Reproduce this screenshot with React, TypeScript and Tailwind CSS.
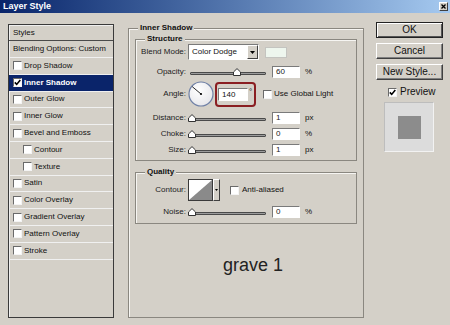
import React from 'react';

type Item = { name: string; indent?: boolean; checked?: boolean; selected?: boolean };

const items: Item[] = [
  { name: 'Drop Shadow' },
  { name: 'Inner Shadow', checked: true, selected: true },
  { name: 'Outer Glow' },
  { name: 'Inner Glow' },
  { name: 'Bevel and Emboss' },
  { name: 'Contour', indent: true },
  { name: 'Texture', indent: true },
  { name: 'Satin' },
  { name: 'Color Overlay' },
  { name: 'Gradient Overlay' },
  { name: 'Pattern Overlay' },
  { name: 'Stroke' },
];

const Check = ({ checked = false }: { checked?: boolean }) => (
  <span className="flex h-[9px] w-[9px] shrink-0 items-center justify-center border border-b-[#f4f4f4] border-l-[#6a6a6a] border-r-[#f4f4f4] border-t-[#6a6a6a] bg-white">
    {checked && (
      <svg width="7" height="7" viewBox="0 0 7 7">
        <path d="M0.8 3.4 L2.7 5.4 L6.3 1" fill="none" stroke="#000" strokeWidth="1.6" />
      </svg>
    )}
  </span>
);

const Slider = ({ pos }: { pos: number }) => (
  <div className="relative h-[10px] w-[78px] shrink-0">
    <div className="absolute left-[2px] right-0 top-[5px] h-[3px] rounded-[1px] border border-[#4a4a4a] bg-[#9c9c9c]" />
    <svg className="absolute top-[1px]" style={{ left: pos }} width="8" height="8" viewBox="0 0 8 8">
      <path d="M0.5 7.5 V4 L4 0.6 L7.5 4 V7.5 Z" fill="#fff" stroke="#333" />
    </svg>
  </div>
);

const Field = ({ value }: { value: string }) => (
  <div className="ml-[6px] h-[12px] w-[28px] shrink-0 border border-b-white border-l-[#7a7a7a] border-r-white border-t-[#7a7a7a] bg-white pl-[3px] text-[8px] leading-[10px] text-[#222]">
    {value}
  </div>
);

const Row = ({ label, children, className = '' }: { label: string; children: React.ReactNode; className?: string }) => (
  <div className={`flex items-center ${className}`}>
    <span className="w-[52px] shrink-0 pr-[2px] text-right text-[8px] leading-none text-[#222]">{label}</span>
    {children}
  </div>
);

const Button = ({ label, primary = false }: { label: string; primary?: boolean }) => (
  <div
    className={`flex h-[16px] w-[67px] items-center justify-center bg-[#d4d0c8] text-[10px] leading-none text-[#111] ${
      primary
        ? 'border border-[#222] shadow-[inset_1px_1px_0_#fff,inset_-1px_-1px_0_#555]'
        : 'border border-b-[#404040] border-l-white border-r-[#404040] border-t-white shadow-[inset_-1px_-1px_0_#808080]'
    }`}
  >
    {label}
  </div>
);

export default function App() {
  return (
    <div className="flex h-[325px] w-[450px] flex-col overflow-hidden bg-[#d4d0c8] font-['Liberation_Sans',Arial,sans-serif] text-[#111]">
      {/* title bar */}
      <div className="flex h-[13px] shrink-0 items-center justify-between bg-gradient-to-r from-[#0a246a] to-[#a6caf0] pl-[3px] pr-[2px]">
        <span className="text-[9px] font-bold leading-none text-white">Layer Style</span>
        <span className="flex h-[9px] w-[9px] items-center justify-center border border-b-[#404040] border-l-white border-r-[#404040] border-t-white bg-[#d4d0c8]">
          <svg width="5" height="5" viewBox="0 0 5 5">
            <path d="M0.5 0.5 L4.5 4.5 M4.5 0.5 L0.5 4.5" stroke="#000" strokeWidth="1.3" />
          </svg>
        </span>
      </div>

      <div className="flex pl-[8px] pt-[10px]">
        {/* styles list */}
        <div className="mt-[1px] flex h-[294px] w-[106px] shrink-0 flex-col border border-[#3a3a3a] shadow-[inset_1px_1px_0_#efefef]">
          <div className="flex h-[16px] items-center border-b border-[#4a4a4a] pl-[4px] text-[8px] leading-none">Styles</div>
          <div className="flex h-[17px] items-center border-b border-[#f0f0f0] pl-[4px] text-[8px] leading-none">
            Blending Options: Custom
          </div>
          {items.map((it) => (
            <div
              key={it.name}
              className={`flex h-[16.8px] items-center gap-[2px] border-b border-[#f0f0f0] text-[8px] leading-none ${
                it.indent ? 'pl-[14px]' : 'pl-[4px]'
              } ${it.selected ? 'bg-[#0a246a] font-bold text-white' : ''}`}
            >
              <Check checked={it.checked} />
              <span>{it.name}</span>
            </div>
          ))}
        </div>

        {/* main group */}
        <fieldset className="ml-[14px] h-[295px] w-[236px] shrink-0 border border-[#8a8780] shadow-[inset_1px_1px_0_#f6f5f2]">
          <legend className="ml-[9px] bg-[#d4d0c8] px-[2px] text-[8px] font-bold leading-[10px]">Inner Shadow</legend>
          <div className="flex flex-col px-[6px]">
            <fieldset className="mt-[1px] h-[127px] border border-[#8a8780] shadow-[inset_1px_1px_0_#f6f5f2]">
              <legend className="ml-[9px] bg-[#d4d0c8] px-[2px] text-[8px] font-bold leading-[10px]">Structure</legend>
              <div className="flex flex-col">
                <Row label="Blend Mode:">
                  <div className="flex h-[16px] w-[71px] shrink-0 border border-b-white border-l-[#7a7a7a] border-r-white border-t-[#7a7a7a] bg-white">
                    <span className="flex flex-1 items-center pl-[3px] text-[8px] leading-none">Color Dodge</span>
                    <span className="flex w-[11px] items-center justify-center border border-b-[#404040] border-l-white border-r-[#404040] border-t-white bg-[#d4d0c8]">
                      <svg width="5" height="3" viewBox="0 0 5 3">
                        <path d="M0 0 H5 L2.5 3 Z" fill="#000" />
                      </svg>
                    </span>
                  </div>
                  <span className="ml-[6px] h-[11px] w-[22px] border border-[#c4c4c0] bg-[#eef6ee]" />
                </Row>
                <Row label="Opacity:" className="mt-[6px] h-[12px]">
                  <Slider pos={45} />
                  <Field value="60" />
                  <span className="ml-[5px] text-[8px] leading-none">%</span>
                </Row>
                <Row label="Angle:" className="mt-[3px] h-[26px]">
                  <svg width="26" height="26" viewBox="0 0 26 26" className="shrink-0">
                    <defs>
                      <radialGradient id="dial" cx="0.4" cy="0.35" r="0.7">
                        <stop offset="0" stopColor="#ffffff" />
                        <stop offset="1" stopColor="#e6e6ea" />
                      </radialGradient>
                    </defs>
                    <circle cx="13" cy="13" r="12" fill="url(#dial)" stroke="#6f80a6" strokeWidth="1.2" />
                    <path d="M13 13 L4.2 5.6" stroke="#111" strokeWidth="0.9" />
                    <circle cx="13" cy="13" r="1.1" fill="#000" />
                  </svg>
                  <div className="ml-[1px] flex h-[25px] w-[41px] shrink-0 items-start rounded-[4px] border-2 border-[#8a1e22] pl-[1px] pt-[4px]">
                    <div className="h-[13px] w-[30px] border border-b-white border-l-[#7a7a7a] border-r-white border-t-[#7a7a7a] bg-white pl-[3px] text-[8px] leading-[11px]">
                      140
                    </div>
                    <span className="ml-[1px] text-[8px] leading-none">°</span>
                  </div>
                  <span className="ml-[7px] flex items-center gap-[2px]">
                    <Check />
                    <span className="text-[8px] leading-none">Use Global Light</span>
                  </span>
                </Row>
                <Row label="Distance:" className="mt-[5px] h-[12px]">
                  <Slider pos={0} />
                  <Field value="1" />
                  <span className="ml-[5px] text-[8px] leading-none">px</span>
                </Row>
                <Row label="Choke:" className="mt-[4px] h-[12px]">
                  <Slider pos={0} />
                  <Field value="0" />
                  <span className="ml-[5px] text-[8px] leading-none">%</span>
                </Row>
                <Row label="Size:" className="mt-[4px] h-[12px]">
                  <Slider pos={0} />
                  <Field value="1" />
                  <span className="ml-[5px] text-[8px] leading-none">px</span>
                </Row>
              </div>
            </fieldset>

            <fieldset className="mt-[6px] border border-[#8a8780] pb-[5px] shadow-[inset_1px_1px_0_#f6f5f2]">
              <legend className="ml-[9px] bg-[#d4d0c8] px-[2px] text-[8px] font-bold leading-[10px]">Quality</legend>
              <Row label="Contour:" className="mt-[2px] h-[22px]">
                <div className="flex h-[22px] shrink-0">
                  <svg width="25" height="22" viewBox="0 0 25 22">
                    <rect x="0.5" y="0.5" width="24" height="21" fill="#fff" stroke="#3a3a3a" />
                    <path d="M1 21 L24 1 V21 Z" fill="#8a8a8a" />
                  </svg>
                  <span className="flex w-[7px] items-center justify-center border border-b-[#404040] border-l-white border-r-[#404040] border-t-white bg-[#d4d0c8]">
                    <svg width="3" height="2" viewBox="0 0 3 2">
                      <path d="M0 0 H3 L1.5 2 Z" fill="#000" />
                    </svg>
                  </span>
                </div>
                <span className="ml-[10px] flex items-center gap-[3px]">
                  <Check />
                  <span className="text-[8px] leading-none">Anti-aliased</span>
                </span>
              </Row>
              <Row label="Noise:" className="mt-[5px] h-[12px]">
                <Slider pos={0} />
                <Field value="0" />
                <span className="ml-[5px] text-[8px] leading-none">%</span>
              </Row>
            </fieldset>

            <div className="mt-[28px] pl-[14px] text-center text-[18px] text-[#222]">grave 1</div>
          </div>
        </fieldset>

        {/* buttons */}
        <div className="ml-[12px] mt-[-1px] flex w-[67px] shrink-0 flex-col">
          <Button label="OK" primary />
          <div className="mt-[5px]">
            <Button label="Cancel" />
          </div>
          <div className="mt-[5px]">
            <Button label="New Style..." />
          </div>
          <div className="ml-[12px] mt-[7px] flex h-[10px] items-center gap-[3px]">
            <Check checked />
            <span className="text-[10px] leading-none">Preview</span>
          </div>
          <div className="ml-[8px] mt-[5px] flex h-[50px] w-[50px] items-center justify-center border border-b-[#f2f2f2] border-l-[#bdbdbd] border-r-[#f2f2f2] border-t-[#bdbdbd] bg-[#dcdcdc]">
            <div className="h-[23px] w-[23px] bg-[#8c8c8c]" />
          </div>
        </div>
      </div>
    </div>
  );
}
